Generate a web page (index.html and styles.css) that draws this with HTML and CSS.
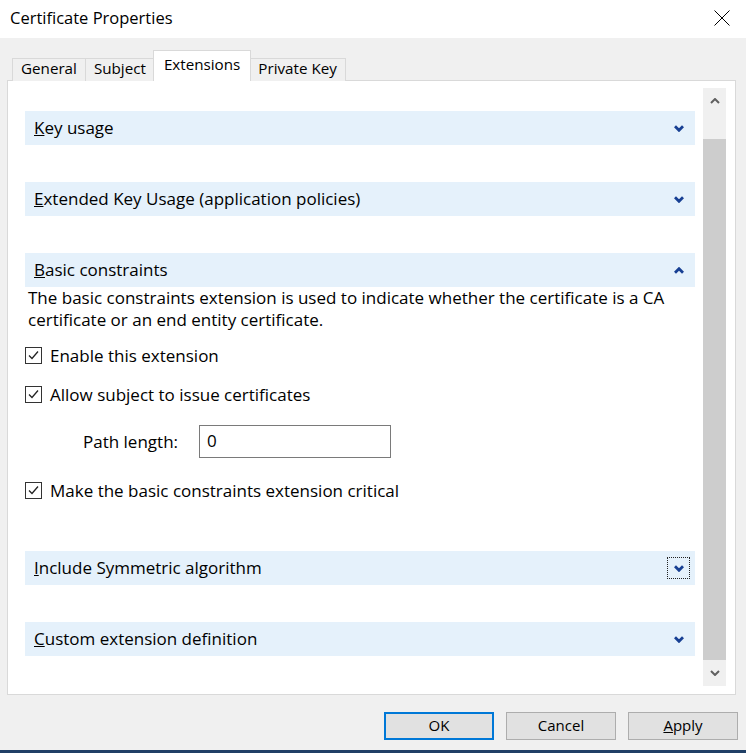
FILE: index.html
```html
<!DOCTYPE html>
<html>
<head>
	<meta charset="utf-8">
	<title>Certificate Properties</title>
	<link rel="stylesheet" href="styles.css">
</head>
<body>
	<div class="dialog">
		<div class="titlebar">
			<span class="title">Certificate Properties</span>
			<svg class="close" width="16" height="16" viewBox="0 0 16 16">
				<path d="M0.5 0.5 L15.5 15.5 M15.5 0.5 L0.5 15.5" stroke="#000" stroke-width="1" fill="none"/>
			</svg>
		</div>

		<div class="tabs">
			<div class="tab">General</div>
			<div class="tab">Subject</div>
			<div class="tab active">Extensions</div>
			<div class="tab">Private Key</div>
		</div>

		<div class="panel">
			<div class="scroller">
				<div class="sections">
					<div class="section">
						<div class="bar">
							<span><u>K</u>ey usage</span>
							<span class="toggle">
								<svg width="10" height="7" viewBox="0 0 10 7"><path d="M1 1.3 L5 5.3 L9 1.3"/></svg>
							</span>
						</div>
					</div>

					<div class="section">
						<div class="bar">
							<span><u>E</u>xtended Key Usage (application policies)</span>
							<span class="toggle">
								<svg width="10" height="7" viewBox="0 0 10 7"><path d="M1 1.3 L5 5.3 L9 1.3"/></svg>
							</span>
						</div>
					</div>

					<div class="section open">
						<div class="bar">
							<span><u>B</u>asic constraints</span>
							<span class="toggle">
								<svg width="10" height="7" viewBox="0 0 10 7"><path d="M1 5.7 L5 1.7 L9 5.7"/></svg>
							</span>
						</div>
						<p class="desc">The basic constraints extension is used to indicate whether the certificate is a CA certificate or an end entity certificate.</p>
						<div class="check first">
							<span class="box"><svg width="13" height="13" viewBox="0 0 13 13"><path d="M2 6.5 L5 9.5 L11 2.5"/></svg></span>
							<span>Enable this extension</span>
						</div>
						<div class="check second">
							<span class="box"><svg width="13" height="13" viewBox="0 0 13 13"><path d="M2 6.5 L5 9.5 L11 2.5"/></svg></span>
							<span>Allow subject to issue certificates</span>
						</div>
						<div class="path-row">
							<span class="path-label">Path length:</span>
							<div class="field">0</div>
						</div>
						<div class="check third">
							<span class="box"><svg width="13" height="13" viewBox="0 0 13 13"><path d="M2 6.5 L5 9.5 L11 2.5"/></svg></span>
							<span>Make the basic constraints extension critical</span>
						</div>
					</div>

					<div class="section">
						<div class="bar">
							<span><u>I</u>nclude Symmetric algorithm</span>
							<span class="toggle focused">
								<svg width="10" height="7" viewBox="0 0 10 7"><path d="M1 1.3 L5 5.3 L9 1.3"/></svg>
							</span>
						</div>
					</div>

					<div class="section">
						<div class="bar">
							<span><u>C</u>ustom extension definition</span>
							<span class="toggle">
								<svg width="10" height="7" viewBox="0 0 10 7"><path d="M1 1.3 L5 5.3 L9 1.3"/></svg>
							</span>
						</div>
					</div>
				</div>

				<div class="scrollbar">
					<div class="arrow">
						<svg width="10" height="6" viewBox="0 0 10 6"><path d="M1 5 L5 1 L9 5"/></svg>
					</div>
					<div class="thumb"></div>
					<div class="arrow">
						<svg width="10" height="6" viewBox="0 0 10 6"><path d="M1 1 L5 5 L9 1"/></svg>
					</div>
				</div>
			</div>
		</div>

		<div class="buttons">
			<button class="btn default">OK</button>
			<button class="btn">Cancel</button>
			<button class="btn"><u>A</u>pply</button>
		</div>
		<div class="edge"></div>
	</div>
</body>
</html>
```

FILE: styles.css
```css
html, body {
	margin: 0;
	padding: 0;
	width: 746px;
	height: 753px;
	overflow: hidden;
	background-color: #f0f0f0;
	font-family: 'Open Sans', 'Noto Sans', sans-serif;
	font-size: 17px;
	color: #000;
}
.dialog {
	display: flex;
	flex-direction: column;
	height: 753px;
}
.titlebar {
	height: 38px;
	background-color: #fff;
	display: flex;
	align-items: center;
	justify-content: space-between;
	padding: 0 16px 4px 10px;
	box-sizing: border-box;
}
.title {
	font-size: 16.5px;
}
.close {
	display: block;
	margin-top: 2px;
}

/* tabs */
.tabs {
	display: flex;
	align-items: flex-end;
	height: 30px;
	margin-top: 12px;
	padding-left: 12px;
	position: relative;
	z-index: 1;
	font-size: 15.2px;
}
.tab {
	height: 23px;
	line-height: 19px;
	padding: 0 8px;
	border: 1px solid #d9d9d9;
	border-bottom: none;
	margin-right: -1px;
	background-color: #f0f0f0;
	box-sizing: border-box;
	margin-bottom: -1px;
}
.tab.active {
	height: 31px;
	line-height: 27px;
	padding: 0 10px;
	background-color: #fff;
	margin-left: -1px;
	margin-right: -2px;
	position: relative;
	z-index: 2;
}

/* panel */
.panel {
	height: 615px;
	width: 729px;
	margin-left: 7px;
	box-sizing: border-box;
	border: 1px solid #d9d9d9;
	background-color: #fff;
	padding: 7px 9px 8px 8px;
}
.scroller {
	display: flex;
	height: 100%;
}
.sections {
	flex: 1;
	padding: 23px 8px 0 9px;
}
.section {
	margin-bottom: 37px;
}
.section.open {
	padding-bottom: 12px;
}
.bar {
	height: 34px;
	background-color: #e5f1fb;
	display: flex;
	align-items: center;
	justify-content: space-between;
	padding-left: 9px;
}
.bar > span:first-child {
	margin-top: -2px;
}
.toggle {
	width: 23px;
	height: 22px;
	margin-right: 5px;
	box-sizing: border-box;
	display: flex;
	align-items: center;
	justify-content: center;
}
.toggle.focused {
	border: 1px dotted #222;
}
.toggle svg path {
	fill: none;
	stroke: #173f93;
	stroke-width: 2.8;
}
.desc {
	margin: 0;
	padding-left: 3px;
	line-height: 22px;
}

/* checkboxes */
.check {
	height: 24px;
	display: flex;
	align-items: center;
	gap: 8px;
}
.check.first {
	margin-top: 12px;
}
.check.second {
	margin-top: 15px;
}
.check.third {
	margin-top: 20px;
}
.box {
	width: 17px;
	height: 17px;
	box-sizing: border-box;
	border: 1px solid #333;
	background-color: #fff;
	display: flex;
	align-items: center;
	justify-content: center;
}
.box svg path {
	fill: none;
	stroke: #222;
	stroke-width: 1.3;
}
.path-row {
	display: flex;
	align-items: center;
	margin-top: 19px;
	padding-left: 58px;
}
.path-label {
	width: 116px;
}
.field {
	width: 192px;
	height: 33px;
	box-sizing: border-box;
	border: 1px solid #7a7a7a;
	padding-left: 7px;
	line-height: 30px;
}

/* scrollbar */
.scrollbar {
	width: 23px;
	background-color: #f0f0f0;
	display: flex;
	flex-direction: column;
}
.arrow {
	height: 26px;
	display: flex;
	align-items: center;
	justify-content: center;
}
.arrow svg path {
	fill: none;
	stroke: #606060;
	stroke-width: 2;
}
.thumb {
	flex: 1;
	margin-top: 25px;
	background-color: #cdcdcd;
}

/* buttons */
.buttons {
	display: flex;
	justify-content: flex-end;
	gap: 12px;
	padding: 17px 8px 10px 0;
}
.btn {
	width: 110px;
	height: 28px;
	box-sizing: border-box;
	border: 1px solid #adadad;
	background-color: #e1e1e1;
	font-family: 'Open Sans', 'Noto Sans', sans-serif;
	font-size: 15px;
	color: #000;
	padding: 0 0 3px;
}
.btn.default {
	border: 2px solid #0078d7;
}
.edge {
	height: 3px;
	background-color: #203f66;
}
```
